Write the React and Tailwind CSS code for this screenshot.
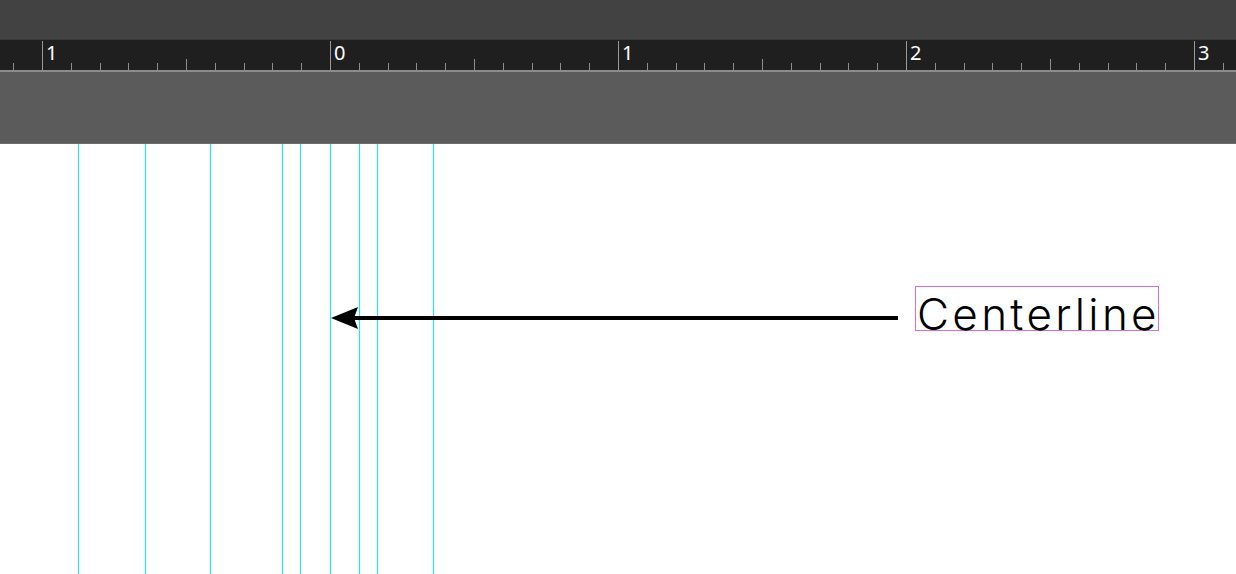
import React from "react";

const GUIDES = [78, 145, 210, 282, 300, 330, 359, 377, 433];
const MAJORS = [
  { x: 42, label: "1" },
  { x: 330, label: "0" },
  { x: 618, label: "1" },
  { x: 906, label: "2" },
  { x: 1194, label: "3" },
];

function Ruler() {
  const ticks = [];
  for (let j = -1; j <= 42; j++) {
    if (j % 10 === 0) continue;
    const x = Math.round(42 + 28.8 * j) + 0.5;
    const top = Math.abs(j % 5) === 0 ? 19 : 23;
    ticks.push(<line key={j} x1={x} x2={x} y1={top} y2={30} stroke="#8e8e8e" strokeWidth="1" />);
  }
  return (
    <svg width="1236" height="32" className="block">
      <rect x="0" y="0" width="1236" height="32" fill="#1f1f1f" />
      {ticks}
      {MAJORS.map((m) => (
        <g key={m.x}>
          <line x1={m.x + 0.5} x2={m.x + 0.5} y1={1} y2={30} stroke="#9a9a9a" strokeWidth="1" />
          <text
            x={m.x + 4}
            y={20}
            fill="#ffffff"
            fontSize="20"
            fontFamily="'Noto Sans', sans-serif"
          >
            {m.label}
          </text>
        </g>
      ))}
      <rect x="0" y="30" width="1236" height="2" fill="#8c8c8c" />
    </svg>
  );
}

export default function App() {
  return (
    <div className="flex flex-col w-[1236px] h-[574px] overflow-hidden bg-white">
      {/* Top bar */}
      <div className="h-[40px] bg-[#424242] border-b border-[#383838]" />

      {/* Ruler */}
      <Ruler />

      {/* Gray band */}
      <div className="h-[72px] bg-[#5b5b5b] border-b border-[#6e6e6e]" />

      {/* Canvas */}
      <div className="relative flex-1 bg-white">
        <svg width="1236" height="430" className="absolute inset-0">
          {GUIDES.map((x) => (
            <line key={x} x1={x + 0.5} x2={x + 0.5} y1={0} y2={430} stroke="#2fe0e6" strokeWidth="1.2" />
          ))}
          <line x1="352" x2="898" y1="174" y2="174" stroke="#000" strokeWidth="4" />
          <polygon points="331,174 358,163 354,174 358,185" fill="#000" />
        </svg>

        <div className="absolute left-[915px] top-[142px] w-[244px] h-[45px] border border-[#d070d8]">
          <div className="ml-[1px] mt-[5px] text-[44px] leading-none font-light tracking-[0.075em] text-black font-['Inter',sans-serif] whitespace-nowrap">
            Centerline
          </div>
        </div>
      </div>
    </div>
  );
}
